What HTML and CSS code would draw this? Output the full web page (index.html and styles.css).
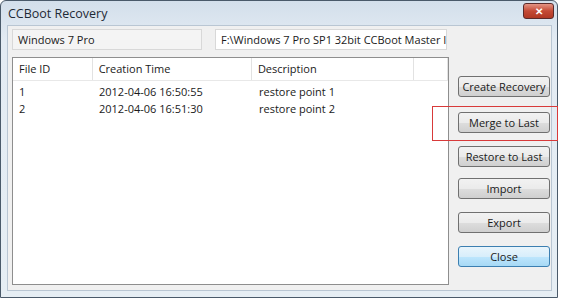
FILE: index.html
```html
<html lang="en">
<head>
    <meta charset="UTF-8">
    <title>CCBoot Recovery</title>
    <link rel="stylesheet" href="styles.css">
</head>
<body>
    <div class="window">
        <div class="titlebar">
            <span class="title">CCBoot Recovery</span>
            <span class="close-x">✕</span>
        </div>
        <div class="client">
            <div class="left">
                <div class="fields">
                    <div class="field field-name">Windows 7 Pro</div>
                    <div class="field field-path">F:\Windows 7 Pro SP1 32bit CCBoot Master Image</div>
                </div>
                <div class="list">
                    <div class="list-head">
                        <div class="col c-id">File ID</div>
                        <div class="col c-time">Creation Time</div>
                        <div class="col c-desc">Description</div>
                        <div class="col c-rest"></div>
                    </div>
                    <div class="list-row">
                        <div class="col c-id">1</div>
                        <div class="col c-time">2012-04-06 16:50:55</div>
                        <div class="col c-desc">restore point 1</div>
                    </div>
                    <div class="list-row">
                        <div class="col c-id">2</div>
                        <div class="col c-time">2012-04-06 16:51:30</div>
                        <div class="col c-desc">restore point 2</div>
                    </div>
                </div>
            </div>
            <div class="buttons">
                <button class="btn">Create Recovery</button>
                <button class="btn btn-merge">Merge to Last</button>
                <button class="btn">Restore to Last</button>
                <button class="btn btn-import">Import</button>
                <button class="btn">Export</button>
                <button class="btn btn-default">Close</button>
            </div>
        </div>
        <div class="highlight"></div>
    </div>
</body>
</html>
```

FILE: styles.css
```css
body {
    margin: 0;
    background: #ffffff;
    font-family: "Open Sans", "Noto Sans", sans-serif;
    font-size: 11px;
    color: #1a1a1a;
}
.window {
    position: relative;
    width: 556px;
    height: 296px;
    border: 1px solid #4a5a6a;
    border-radius: 6px 6px 0 0;
    background: linear-gradient(#d3dfeb, #e3ebf3 40px, #e6eef4);
    display: flex;
    flex-direction: column;
}
.titlebar {
    height: 24px;
    display: flex;
    align-items: center;
    justify-content: space-between;
    padding: 0 3px 0 7px;
}
.title {
    font-size: 12.5px;
    color: #1e2a36;
    margin-top: 1px;
}
.close-x {
    width: 29px;
    height: 14px;
    margin-top: -5px;
    border: 1px solid #5a2a2a;
    border-radius: 3px;
    background: linear-gradient(#e49484, #c44a36 50%, #b03824);
    color: #ffffff;
    font-size: 10px;
    font-weight: bold;
    text-align: center;
    line-height: 14px;
}
.client {
    flex: 1;
    margin: 0 5px 6px 6px;
    background: #f0f0f0;
    border: 1px solid #b9c6d3;
    display: flex;
}
.left {
    width: 437px;
    padding: 3px 0 0 4px;
}
.fields {
    display: flex;
    gap: 13px;
}
.field {
    height: 21px;
    border: 1px solid #d8d8d8;
    background: #f4f4f4;
    padding-left: 5px;
    line-height: 19px;
    white-space: nowrap;
    overflow: hidden;
    box-sizing: border-box;
}
.field-name {
    width: 190px;
}
.field-path {
    width: 232px;
    background: #ffffff;
}
.list {
    margin-top: 7px;
    height: 228px;
    border: 1px solid #8e8e8e;
    background: #ffffff;
    box-sizing: border-box;
}
.list-head {
    display: flex;
    height: 22px;
    border-bottom: 1px solid #e8e8e8;
    line-height: 22px;
    margin-bottom: 2px;
}
.list-head .col {
    border-right: 1px solid #e2e2e2;
}
.list-row {
    display: flex;
    height: 17px;
    line-height: 17px;
}
.col {
    padding-left: 6px;
    box-sizing: border-box;
    white-space: nowrap;
}
.c-id { width: 80px; }
.c-time { width: 160px; }
.c-desc { width: 163px; }
.c-rest { width: 34px; }
.buttons {
    display: flex;
    flex-direction: column;
    gap: 13px;
    padding-top: 50px;
    margin-left: 9px;
}
.btn {
    width: 92px;
    height: 21px;
    font-family: "Open Sans", "Noto Sans", sans-serif;
    font-size: 11px;
    color: #1a1a1a;
    border: 1px solid #707070;
    border-radius: 3px;
    background: linear-gradient(#f2f2f2, #ebebeb 50%, #dddddd 51%, #cfcfcf);
    padding: 0;
}
.btn-merge {
    margin-top: 2px;
}
.btn-import {
    margin-top: -2px;
}
.btn-default {
    border-color: #3c7fb1;
    background: linear-gradient(#e9f5fc, #d8eefb 50%, #bee6fd 51%, #a7d9f5);
}
.highlight {
    position: absolute;
    left: 431px;
    top: 105px;
    width: 124px;
    height: 33px;
    border: 1px solid #d83a3a;
}
```
